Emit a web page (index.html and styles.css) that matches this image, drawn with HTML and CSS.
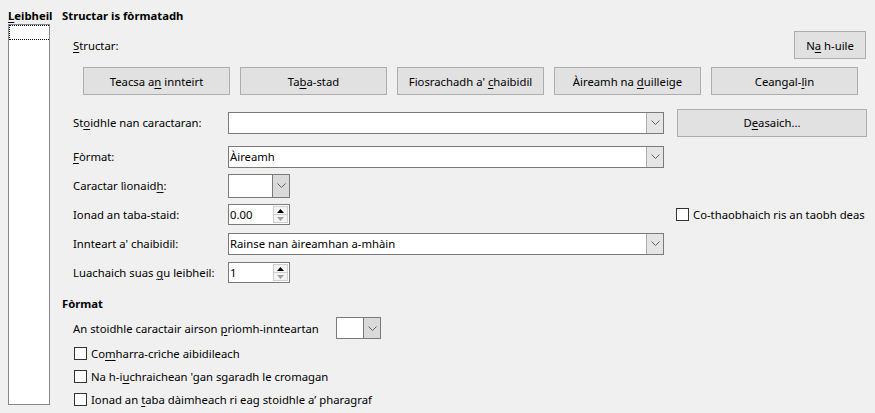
FILE: index.html
```html
<!DOCTYPE html>
<html>
<head>
<meta charset="utf-8">
<link rel="stylesheet" href="styles.css">
</head>
<body>
<div class="page">
  <div class="levels">
    <div class="title"><u>L</u>eibheil</div>
    <div class="list"><div class="item"></div></div>
  </div>
  <div class="main">
    <div class="title">Structar is fòrmatadh</div>
    <div class="section">
      <div class="struct-row">
        <span><u>S</u>tructar:</span>
        <button class="btn all">N<u>a</u> h-uile</button>
      </div>
      <div class="btn-row">
        <button class="btn wide">Teacsa a<u>n</u> innteirt</button>
        <button class="btn wide">Ta<u>b</u>a-stad</button>
        <button class="btn wide">Fiosrachadh a' <u>c</u>haibidil</button>
        <button class="btn wide">Àireamh na <u>d</u>uilleige</button>
        <button class="btn wide">Ceangal-<u>l</u>ìn</button>
      </div>
      <div class="form">
        <div class="row first">
          <span class="lbl">St<u>o</u>idhle nan caractaran:</span>
          <div class="combo long"><span class="val"></span><span class="arrow"><svg width="9" height="5" viewBox="0 0 9 5"><path d="M0.5 0.5 L4.5 4.5 L8.5 0.5" fill="none" stroke="#606060" stroke-width="1"/></svg></span></div>
          <button class="btn edit">D<u>e</u>asaich...</button>
        </div>
        <div class="row">
          <span class="lbl"><u>F</u>òrmat:</span>
          <div class="combo long"><span class="val">Àireamh</span><span class="arrow"><svg width="9" height="5" viewBox="0 0 9 5"><path d="M0.5 0.5 L4.5 4.5 L8.5 0.5" fill="none" stroke="#606060" stroke-width="1"/></svg></span></div>
        </div>
        <div class="row">
          <span class="lbl">Caractar lìonaid<u>h</u>:</span>
          <div class="combo short tall"><span class="val"></span><span class="arrow dark"><svg width="9" height="5" viewBox="0 0 9 5"><path d="M0.5 0.5 L4.5 4.5 L8.5 0.5" fill="none" stroke="#606060" stroke-width="1"/></svg></span></div>
        </div>
        <div class="row">
          <span class="lbl">Ionad an taba-staid:</span>
          <div class="spin"><span class="val">0.00</span><span class="spinbtns"><span class="up"><svg width="7" height="4" viewBox="0 0 7 4"><path d="M0 4 L3.5 0 L7 4 Z" fill="#000"/></svg></span><span class="down"><svg width="7" height="4" viewBox="0 0 7 4"><path d="M0 0 L3.5 4 L7 0 Z" fill="#a0a0a0"/></svg></span></span></div>
          <label class="check right"><span class="box"></span><span class="txt">Co-thaobhaich ris an taobh deas</span></label>
        </div>
        <div class="row">
          <span class="lbl">Innteart a' chaibidil:</span>
          <div class="combo long"><span class="val">Rainse nan àireamhan a-mhàin</span><span class="arrow"><svg width="9" height="5" viewBox="0 0 9 5"><path d="M0.5 0.5 L4.5 4.5 L8.5 0.5" fill="none" stroke="#606060" stroke-width="1"/></svg></span></div>
        </div>
        <div class="row">
          <span class="lbl">Luachaich suas <u>g</u>u leibheil:</span>
          <div class="spin"><span class="val">1</span><span class="spinbtns"><span class="up"><svg width="7" height="4" viewBox="0 0 7 4"><path d="M0 4 L3.5 0 L7 4 Z" fill="#000"/></svg></span><span class="down"><svg width="7" height="4" viewBox="0 0 7 4"><path d="M0 0 L3.5 4 L7 0 Z" fill="#a0a0a0"/></svg></span></span></div>
        </div>
      </div>
    </div>
    <div class="title format-title">Fòrmat</div>
    <div class="section">
      <div class="main-style">
        <span class="ms-lbl">An stoidhle caractair airson <u>p</u>rìomh-innteartan</span>
        <div class="combo tiny"><span class="val"></span><span class="arrow dark"><svg width="9" height="5" viewBox="0 0 9 5"><path d="M0.5 0.5 L4.5 4.5 L8.5 0.5" fill="none" stroke="#606060" stroke-width="1"/></svg></span></div>
      </div>
      <label class="check line firstcheck"><span class="box"></span><span class="txt">Co<u>m</u>harra-crìche aibidileach</span></label>
      <label class="check line"><span class="box"></span><span class="txt">Na h-i<u>u</u>chraichean 'gan sgaradh le cromagan</span></label>
      <label class="check line"><span class="box"></span><span class="txt">Ionad an <u>t</u>aba dàimheach ri eag stoidhle a’ pharagraf</span></label>
    </div>
  </div>
</div>
</body>
</html>
```

FILE: styles.css
```css
html, body {
  margin: 0;
  padding: 0;
  background: #f0f0f0;
}
body {
  font-family: "Noto Sans", "Open Sans", sans-serif;
  font-size: 11.3px;
  color: #000;
  width: 875px;
  height: 413px;
  overflow: hidden;
}
u { text-decoration: underline; text-underline-offset: 2px; }
.page {
  display: flex;
  padding: 8px 9px 0 8px;
  height: 413px;
  box-sizing: border-box;
}
.title {
  font-weight: bold;
  line-height: 16px;
  height: 16px;
  white-space: nowrap;
}
.levels {
  width: 42px;
  flex: none;
  display: flex;
  flex-direction: column;
}
.levels .list {
  height: 381px;
  background: #fff;
  border: 1px solid #828790;
  box-sizing: border-box;
}
.levels .item {
  height: 15px;
  border: 1px dotted #000;
  border-right: none;
  box-sizing: border-box;
}
.main {
  flex: 1;
  min-width: 0;
  margin-left: 12px;
  display: flex;
  flex-direction: column;
}
.section {
  padding-left: 11px;
  display: flex;
  flex-direction: column;
}
.btn {
  font: inherit;
  color: #000;
  background: #e1e1e1;
  border: 1px solid #adadad;
  padding: 0;
  margin: 0;
  height: 28px;
  box-sizing: border-box;
}
.struct-row {
  display: flex;
  align-items: center;
  justify-content: space-between;
  margin-top: 7px;
  height: 28px;
}
.btn.all { width: 72px; }
.btn-row {
  display: flex;
  gap: 10px;
  margin-top: 8px;
  padding-left: 10px;
}
.btn.wide { width: 147px; }
.form {
  margin-top: 13px;
  display: flex;
  flex-direction: column;
}
.row {
  display: flex;
  align-items: center;
  height: 29px;
}
.row.first { margin-bottom: 5px; }
.lbl { width: 155px; flex: none; white-space: nowrap; }
.combo, .spin {
  display: flex;
  flex: none;
  background: #fff;
  border: 1px solid #7a7a7a;
  box-sizing: border-box;
  height: 22px;
}
.combo .val, .spin .val {
  flex: 1;
  padding-left: 1px;
  line-height: 20px;
  white-space: nowrap;
  overflow: hidden;
}
.combo.long { width: 436px; }
.combo.short { width: 62px; }
.combo.tall { height: 24px; }
.combo.tall .val { line-height: 22px; }
.combo .arrow {
  width: 17px;
  background: #e5e5e5;
  border-left: 1px solid #adadad;
  display: flex;
  align-items: center;
  justify-content: center;
  box-sizing: border-box;
}
.combo .arrow.dark {
  background: #dadada;
  border-left: 1px solid #7a7a7a;
}
.btn.edit { width: 190px; margin-left: 13px; flex: none; }
.spin { width: 62px; height: 21px; }
.spin .val { line-height: 19px; }
.spinbtns {
  width: 16px;
  display: flex;
  flex-direction: column;
  padding: 1px 1px 1px 0;
  box-sizing: border-box;
}
.spinbtns span {
  flex: 1;
  display: flex;
  align-items: center;
  justify-content: center;
  border: 1px solid #cfcfcf;
  background: #f4f4f4;
}
.spinbtns .down { border-top: none; }
.check {
  display: flex;
  align-items: center;
  white-space: nowrap;
}
.check .box {
  width: 13px;
  height: 13px;
  flex: none;
  border: 1px solid #333;
  background: #fff;
  box-sizing: border-box;
  margin-right: 4px;
}
.check.right { margin-left: 386px; }
.format-title { margin-top: 9px; }
.main-style {
  display: flex;
  align-items: center;
  height: 22px;
  margin-top: 5px;
}
.ms-lbl { width: 263px; flex: none; white-space: nowrap; }
.combo.tiny { width: 45px; }
.check.line { height: 23px; padding-left: 1px; }
.check.firstcheck { margin-top: 3px; }
```
